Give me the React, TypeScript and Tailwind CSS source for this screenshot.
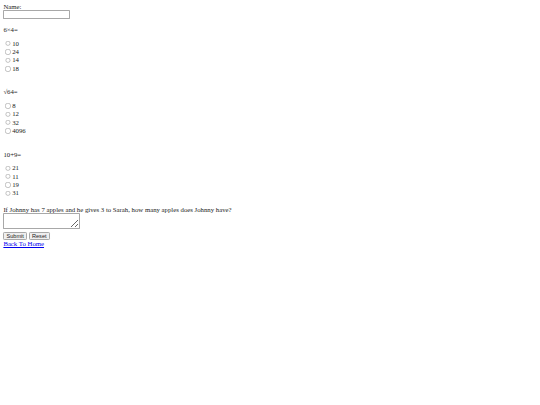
import React from "react";

const groups = [
  { q: "6×4=", name: "q1", opts: ["10", "24", "14", "18"] },
  { q: "√64=", name: "q2", opts: ["8", "12", "32", "4096"] },
  { q: "10+9=", name: "q3", opts: ["21", "11", "19", "31"] },
];

const btn =
  "bg-[#efefef] border border-[#a8a8a8] rounded-[3px] py-[1px] h-[20px] text-[13.333px] font-['Liberation_Sans',sans-serif] text-[#222]";

export default function App() {
  return (
    <div className="[zoom:0.421875] p-2 font-['Liberation_Serif',serif] text-base leading-[normal] text-[#222] bg-white">
      <form onSubmit={(e) => e.preventDefault()}>
        Name:
        <br />
        <input
          type="text"
          className="border border-[#a8a8a8] rounded-[2px] px-[2px] py-[1px] text-[13.333px] font-['Liberation_Sans',sans-serif] w-[157px] h-[21px] align-baseline"
        />
        {groups.map((g) => (
          <div key={g.name}>
            <p className="my-4">{g.q}</p>
            {g.opts.map((o) => (
              <div key={o} className="h-[19.8px] leading-[19.8px]">
                <input
                  type="radio"
                  name={g.name}
                  value={o}
                  className="mt-[3px] mr-[3px] ml-[5px] w-[13px] h-[13px] align-[-1px]"
                />
                {o}
              </div>
            ))}
            <div className="h-[20px]" />
          </div>
        ))}
        If Johnny has 7 apples and he gives 3 to Sarah, how many apples does Johnny have?
        <br />
        <textarea
          rows={2}
          cols={20}
          className="border border-[#a8a8a8] rounded-[2px] p-[2px] mb-[5px] text-[13.333px] font-['Liberation_Mono',monospace] w-[182px] h-[37px] align-baseline"
        />
        <br />
        <button type="submit" className={`${btn} w-[56px]`}>
          Submit
        </button>{" "}
        <button type="reset" className={`${btn} w-[50px]`}>
          Reset
        </button>
        <br />
        <a href="#" className="text-[#0000ee] underline">
          Back To Home
        </a>
      </form>
    </div>
  );
}
